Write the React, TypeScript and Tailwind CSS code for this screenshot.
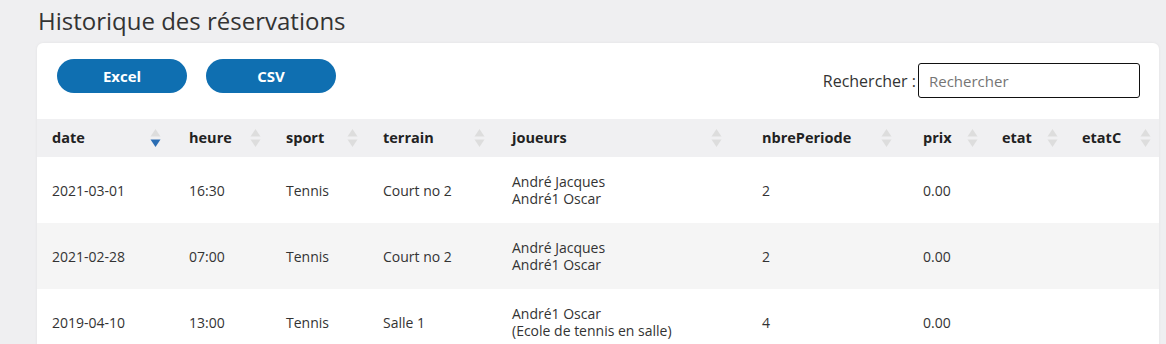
import React from 'react';

type Col = { key: string; label: string; width: string; icon: string; active?: boolean };

const columns: Col[] = [
    { key: 'date', label: 'date', width: 'w-[137px]', icon: 'right-[13px]', active: true },
    { key: 'heure', label: 'heure', width: 'w-[97px]', icon: 'right-[10px]' },
    { key: 'sport', label: 'sport', width: 'w-[97px]', icon: 'right-[10px]' },
    { key: 'terrain', label: 'terrain', width: 'w-[129px]', icon: 'right-[12px]' },
    { key: 'joueurs', label: 'joueurs', width: 'w-[250px]', icon: 'right-[25px]' },
    { key: 'nbrePeriode', label: 'nbrePeriode', width: 'w-[161px]', icon: 'right-[16px]' },
    { key: 'prix', label: 'prix', width: 'w-[79px]', icon: 'right-[9px]' },
    { key: 'etat', label: 'etat', width: 'w-[80px]', icon: 'right-[9px]' },
    { key: 'etatC', label: 'etatC', width: 'w-[92px]', icon: 'right-[8px]' },
];

const rows = [
    { date: '2021-03-01', heure: '16:30', sport: 'Tennis', terrain: 'Court no 2', joueurs: ['André Jacques', 'André1 Oscar'], nbrePeriode: '2', prix: '0.00' },
    { date: '2021-02-28', heure: '07:00', sport: 'Tennis', terrain: 'Court no 2', joueurs: ['André Jacques', 'André1 Oscar'], nbrePeriode: '2', prix: '0.00' },
    { date: '2019-04-10', heure: '13:00', sport: 'Tennis', terrain: 'Salle 1', joueurs: ['André1 Oscar', '(Ecole de tennis en salle)'], nbrePeriode: '4', prix: '0.00' },
];

const SortIcon = ({ active }: { active?: boolean }) => (
    <svg width="11" height="20" viewBox="0 0 11 20" className="block">
        <polygon points="0.5,8.5 5.5,1 10.5,8.5" fill="#dddddd" />
        <polygon points="0.5,11.5 10.5,11.5 5.5,19" fill={active ? '#2b6db3' : '#dddddd'} />
    </svg>
);

export default function App() {
    return (
        <div className="min-h-screen bg-[#efeff1] font-['Open_Sans',sans-serif] text-[#333]">
            <h1 className="pl-[38px] pt-[5px] text-[24px] leading-[32px] font-normal text-[#333]">
                Historique des réservations
            </h1>
            <div className="ml-[37px] mt-[6px] w-[1122px] overflow-hidden rounded-t-[6px] bg-white shadow-[0_0_3px_rgba(0,0,0,0.06)]">
                <div className="flex h-[76px] items-start justify-between">
                    <div className="flex gap-[19px] pl-[20px] pt-[16px]">
                        <button className="h-[34px] w-[130px] rounded-full bg-[#0f6fb1] text-[15px] font-bold text-white">Excel</button>
                        <button className="h-[34px] w-[130px] rounded-full bg-[#0f6fb1] text-[15px] font-bold text-white">CSV</button>
                    </div>
                    <div className="flex items-center pr-[19px] pt-[20px]">
                        <label className="mr-[2px] text-[16px] text-[#333]">Rechercher :</label>
                        <input
                            placeholder="Rechercher"
                            className="h-[35px] w-[222px] rounded-[3px] border border-[#111] px-[10px] text-[15px] placeholder:text-[#757575] outline-none"
                        />
                    </div>
                </div>
                <table className="w-full table-fixed border-collapse text-left">
                    <thead>
                        <tr className="h-[38px] bg-[#f0f0f2]">
                            {columns.map((c) => (
                                <th key={c.key} className={`relative ${c.width} pl-[15px] text-[14.5px] font-bold text-[#222]`}>
                                    {c.label}
                                    <span className={`absolute top-[9px] ${c.icon}`}>
                                        <SortIcon active={c.active} />
                                    </span>
                                </th>
                            ))}
                        </tr>
                    </thead>
                    <tbody>
                        {rows.map((r, i) => (
                            <tr key={i} className={`h-[66px] text-[14px] leading-[17px] ${i % 2 === 1 ? 'bg-[#f5f5f5]' : 'bg-white'}`}>
                                <td className="pl-[15px] align-middle">{r.date}</td>
                                <td className="pl-[15px] align-middle">{r.heure}</td>
                                <td className="pl-[15px] align-middle">{r.sport}</td>
                                <td className="pl-[15px] align-middle">{r.terrain}</td>
                                <td className="pl-[15px] align-middle">
                                    {r.joueurs.map((j) => (
                                        <div key={j}>{j}</div>
                                    ))}
                                </td>
                                <td className="pl-[15px] align-middle">{r.nbrePeriode}</td>
                                <td className="pl-[15px] align-middle">{r.prix}</td>
                                <td className="pl-[15px] align-middle"></td>
                                <td className="pl-[15px] align-middle"></td>
                            </tr>
                        ))}
                    </tbody>
                </table>
            </div>
        </div>
    );
}
